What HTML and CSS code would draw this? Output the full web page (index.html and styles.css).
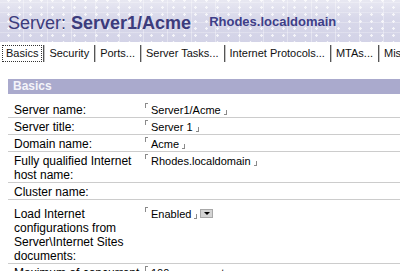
FILE: index.html
```html
<!DOCTYPE html>
<html>
<head>
<meta charset="utf-8">
<link rel="stylesheet" href="styles.css">
</head>
<body>
<div class="hdr">
  <span class="title">Server: <b>Server1/Acme</b></span>
  <span class="host">Rhodes.localdomain</span>
</div>
<div class="tabs">
  <span class="tab active">Basics</span><span class="sep"></span>
  <span class="tab">Security</span><span class="sep"></span>
  <span class="tab">Ports...</span><span class="sep"></span>
  <span class="tab">Server Tasks...</span><span class="sep"></span>
  <span class="tab">Internet Protocols...</span><span class="sep"></span>
  <span class="tab">MTAs...</span><span class="sep"></span>
  <span class="tab">Miscellaneous...</span>
</div>
<div class="content">
  <div class="bar">Basics</div>
  <table class="form">
    <tr><td class="lbl">Server name:</td><td class="val"><span class="fo"></span>Server1/Acme<span class="fc"></span></td></tr>
    <tr><td class="lbl">Server title:</td><td class="val"><span class="fo"></span>Server 1<span class="fc"></span></td></tr>
    <tr><td class="lbl">Domain name:</td><td class="val"><span class="fo"></span>Acme<span class="fc"></span></td></tr>
    <tr><td class="lbl">Fully qualified Internet host name:</td><td class="val"><span class="fo"></span>Rhodes.localdomain<span class="fc"></span></td></tr>
    <tr><td class="lbl">Cluster name:</td><td class="val"></td></tr>
    <tr class="tall"><td class="lbl">Load Internet configurations from Server\Internet Sites documents:</td><td class="val"><span class="fo"></span>Enabled<span class="fc"></span><span class="dd"></span></td></tr>
    <tr><td class="lbl">Maximum of concurrent</td><td class="val"><span class="fo"></span>100 concurrent<span class="fc"></span></td></tr>
  </table>
</div>
</body>
</html>
```

FILE: styles.css
```css
html, body {
  margin: 0;
  padding: 0;
  background: #ffffff;
  overflow: hidden;
}
body {
  width: 400px;
  height: 271px;
  font-family: "Liberation Sans", Arial, sans-serif;
  color: #000;
}
.hdr {
  height: 42px;
  box-sizing: border-box;
  padding: 0 0 10px 8px;
  display: flex;
  align-items: flex-end;
  white-space: nowrap;
  background:
    radial-gradient(circle at 50% 50%, rgba(255,255,255,0.75) 0 1px, transparent 1.5px) 3px 4px / 11px 7px,
    repeating-linear-gradient(90deg, transparent 0 23px, rgba(255,255,255,0.35) 23px 24px),
    repeating-linear-gradient(0deg, transparent 0 9px, rgba(255,255,255,0.25) 9px 10px),
    linear-gradient(180deg, #e8e8f2 0%, #d8d8ea 45%, #d3d3e7 100%);
}
.title {
  font-size: 18px;
  line-height: 18px;
  color: #3c3c7c;
}
.title b {
  font-weight: bold;
}
.host {
  font-size: 13px;
  line-height: 13px;
  font-weight: bold;
  color: #3e3e88;
  margin-left: 18px;
  padding-bottom: 4px;
}
.tabs {
  display: flex;
  align-items: stretch;
  padding: 3px 0 0 1px;
  height: 20px;
  box-sizing: border-box;
  white-space: nowrap;
  overflow: hidden;
  font-size: 11px;
  line-height: 13px;
}
.tab {
  flex-shrink: 0;
  padding: 1px 3px;
  border: 1px dotted transparent;
  margin: 0 1px 0 1px;
  color: #111;
}
.tab.active {
  border-color: #333;
}
.sep {
  flex-shrink: 0;
  width: 1px;
  background: #555;
  box-shadow: 1px 0 0 #c4c4c4;
}
.content {
  margin: 17px 0 0 8px;
}
.bar {
  height: 15px;
  background: #aaaacd;
  color: #f4f4fa;
  font-weight: bold;
  font-size: 12px;
  line-height: 15px;
  padding-left: 5px;
  margin-bottom: 7px;
}
.form {
  width: 100%;
  border-collapse: collapse;
}
.form td {
  vertical-align: top;
  padding: 2px 0 0 0;
  border-bottom: 1px solid #cccccc;
  line-height: 14px;
}
.form tr.tall td {
  padding-top: 7px;
}
.lbl {
  width: 130px;
  padding-left: 6px !important;
  font-size: 12px;
}
.val {
  font-size: 11px;
  white-space: nowrap;
}
.fo {
  display: inline-block;
  width: 2px;
  height: 4px;
  border-left: 1px solid #8a8a8a;
  border-top: 1px solid #8a8a8a;
  margin: 0 3px 0 1px;
  vertical-align: 6px;
}
.fc {
  display: inline-block;
  width: 2px;
  height: 4px;
  border-right: 1px solid #8a8a8a;
  border-bottom: 1px solid #8a8a8a;
  margin: 0 0 0 3px;
  vertical-align: -1px;
}
.dd {
  display: inline-block;
  width: 11px;
  height: 7px;
  margin-left: 3px;
  background: #d4d4d4;
  border: 1px solid #a8a8a8;
  vertical-align: 0;
  position: relative;
}
.dd::after {
  content: "";
  position: absolute;
  left: 3px;
  top: 2px;
  border-left: 3px solid transparent;
  border-right: 3px solid transparent;
  border-top: 3px solid #000;
}
```
